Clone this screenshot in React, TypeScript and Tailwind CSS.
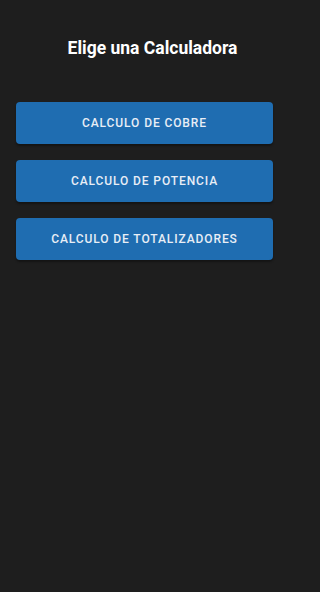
import React from "react";

export default function App() {
  const items = ["CALCULO DE COBRE", "CALCULO DE POTENCIA", "CALCULO DE TOTALIZADORES"];
  return (
    <div
      className="min-h-[592px] w-full bg-[#1e1e1e]"
      style={{ fontFamily: "Roboto, 'Noto Sans', sans-serif" }}
    >
      <div className="w-[289px] px-4">
        <h1 className="pt-[36px] pl-4 text-center text-[17.5px] font-bold leading-6 text-white">
          Elige una Calculadora
        </h1>
        <div className="mt-[42px] flex flex-col gap-4">
          {items.map((t) => (
            <button
              key={t}
              className="h-[42px] w-full rounded-[4px] bg-[#1f6db1] text-[12px] font-medium tracking-[0.9px] text-[#e8eef6] shadow-[0_2px_2px_rgba(0,0,0,0.35)]"
            >
              {t}
            </button>
          ))}
        </div>
      </div>
    </div>
  );
}
